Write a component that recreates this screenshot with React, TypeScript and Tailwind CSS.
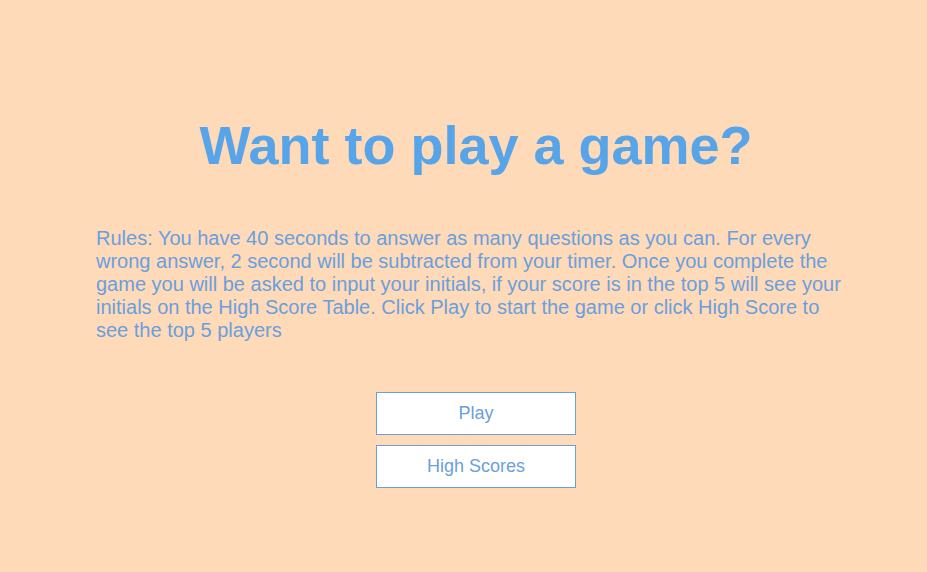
export default function App() {
  return (
    <div
      className="min-h-[572px] w-full bg-[#ffdab9]"
      style={{ fontFamily: '"Liberation Sans", Arial, sans-serif' }}
    >
      <div className="ml-[96px] w-[760px] pt-[114px]">
        <h1 className="text-center text-[54px] font-bold leading-[1.15] text-[#58a4e8]">
          Want to play a game?
        </h1>
        <p className="mt-[51px] text-[20px] leading-[23px] text-[#6a9fdd]">
          Rules: You have 40 seconds to answer as many questions as you can. For every wrong answer, 2 second will be
          subtracted from your timer. Once you complete the game you will be asked to input your initials, if your score
          is in the top 5 will see your initials on the High Score Table. Click Play to start the game or click High Score
          to see the top 5 players
        </p>
        <div className="mt-[50px] flex flex-col items-center gap-[10px]">
          <button className="h-[43px] w-[200px] border border-[#6b9fd9] bg-white text-[18px] text-[#6a9fdd]">
            Play
          </button>
          <button className="h-[43px] w-[200px] border border-[#6b9fd9] bg-white text-[18px] text-[#6a9fdd]">
            High Scores
          </button>
        </div>
      </div>
    </div>
  );
}
